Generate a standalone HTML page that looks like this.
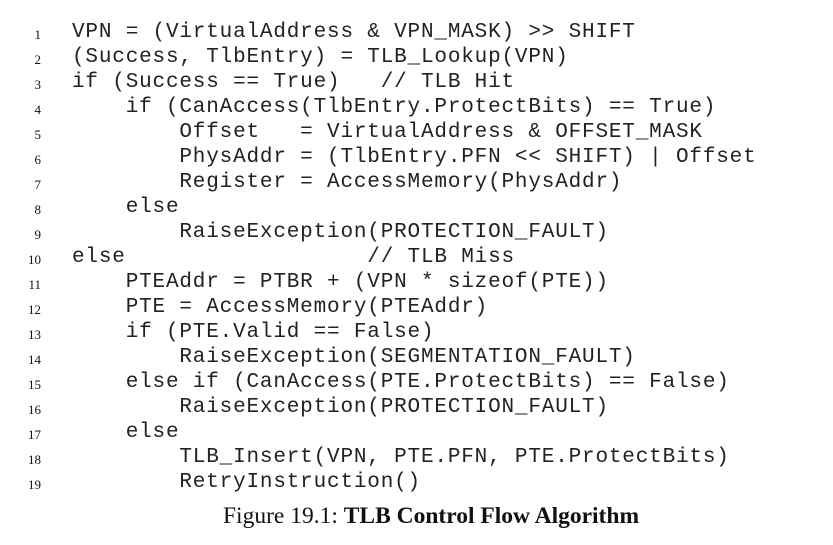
<!DOCTYPE html><html><head><style>
body{margin:0;width:833px;height:545px;background:#fff;overflow:hidden;position:relative;color:#111}
.l{position:absolute;left:0;height:25px;line-height:25px;white-space:pre}
.n{position:absolute;left:0;top:4px;width:41px;line-height:25px;text-align:right;font:13px/25px "Liberation Serif",serif}
.c{position:absolute;left:72px;top:2px;font:21px/25px "Liberation Mono",monospace;letter-spacing:0.82px;color:#222}
.cap{position:absolute;left:0;width:862px;text-align:center;top:503px;font:23.5px "Liberation Serif",serif}
</style></head><body>
<div class="l" style="top:18px"><span class="n">1</span><span class="c">VPN = (VirtualAddress &amp; VPN_MASK) &gt;&gt; SHIFT</span></div>
<div class="l" style="top:43px"><span class="n">2</span><span class="c">(Success, TlbEntry) = TLB_Lookup(VPN)</span></div>
<div class="l" style="top:68px"><span class="n">3</span><span class="c">if (Success == True)   // TLB Hit</span></div>
<div class="l" style="top:93px"><span class="n">4</span><span class="c">    if (CanAccess(TlbEntry.ProtectBits) == True)</span></div>
<div class="l" style="top:118px"><span class="n">5</span><span class="c">        Offset   = VirtualAddress &amp; OFFSET_MASK</span></div>
<div class="l" style="top:143px"><span class="n">6</span><span class="c">        PhysAddr = (TlbEntry.PFN &lt;&lt; SHIFT) | Offset</span></div>
<div class="l" style="top:168px"><span class="n">7</span><span class="c">        Register = AccessMemory(PhysAddr)</span></div>
<div class="l" style="top:193px"><span class="n">8</span><span class="c">    else</span></div>
<div class="l" style="top:218px"><span class="n">9</span><span class="c">        RaiseException(PROTECTION_FAULT)</span></div>
<div class="l" style="top:243px"><span class="n">10</span><span class="c">else                  // TLB Miss</span></div>
<div class="l" style="top:268px"><span class="n">11</span><span class="c">    PTEAddr = PTBR + (VPN * sizeof(PTE))</span></div>
<div class="l" style="top:293px"><span class="n">12</span><span class="c">    PTE = AccessMemory(PTEAddr)</span></div>
<div class="l" style="top:318px"><span class="n">13</span><span class="c">    if (PTE.Valid == False)</span></div>
<div class="l" style="top:343px"><span class="n">14</span><span class="c">        RaiseException(SEGMENTATION_FAULT)</span></div>
<div class="l" style="top:368px"><span class="n">15</span><span class="c">    else if (CanAccess(PTE.ProtectBits) == False)</span></div>
<div class="l" style="top:393px"><span class="n">16</span><span class="c">        RaiseException(PROTECTION_FAULT)</span></div>
<div class="l" style="top:418px"><span class="n">17</span><span class="c">    else</span></div>
<div class="l" style="top:443px"><span class="n">18</span><span class="c">        TLB_Insert(VPN, PTE.PFN, PTE.ProtectBits)</span></div>
<div class="l" style="top:468px"><span class="n">19</span><span class="c">        RetryInstruction()</span></div>
<div class="cap">Figure 19.1: <b>TLB Control Flow Algorithm</b></div>
</body></html>
